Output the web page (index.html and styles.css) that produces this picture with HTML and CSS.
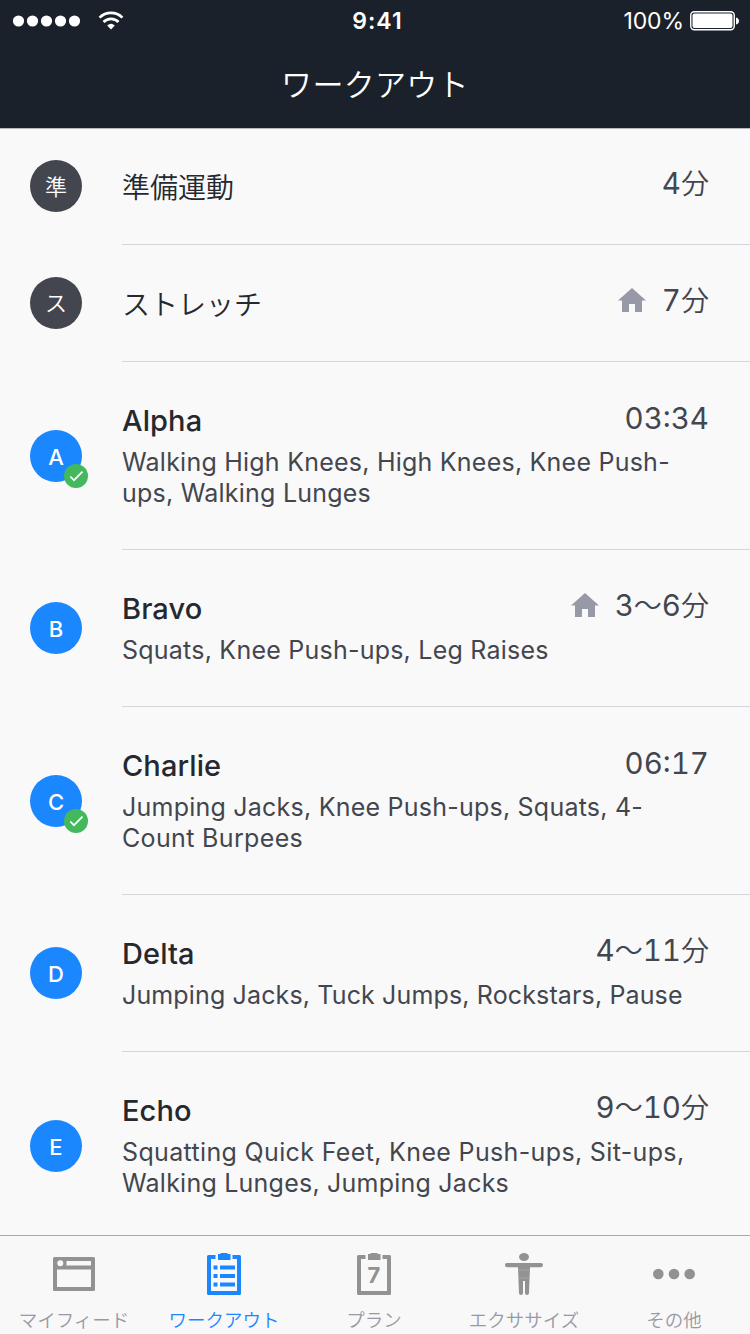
FILE: index.html
```html
<!DOCTYPE html>
<html lang="ja">
<head>
<meta charset="utf-8">
<title>ワークアウト</title>
<link rel="stylesheet" href="styles.css">
</head>
<body>
<div class="screen">
  <header class="header">
    <div class="status">
      <div class="status-left">
        <svg width="68" height="12" viewBox="0 0 68 12" fill="#fff"><circle cx="5.5" cy="6" r="5.6"/><circle cx="19.5" cy="6" r="5.6"/><circle cx="33.5" cy="6" r="5.6"/><circle cx="47.5" cy="6" r="5.6"/><circle cx="61.5" cy="6" r="5.6"/></svg>
        <svg width="26" height="20" viewBox="0 0 26 20" fill="none" stroke="#fff" stroke-width="2.7"><path d="M1.6 6.6A16.2 16.2 0 0 1 24.4 6.6"/><path d="M5.5 11A10.6 10.6 0 0 1 20.5 11"/><path d="M9.2 14.4A5.7 5.7 0 0 1 16.8 14.4L13 18.6Z" fill="#fff" stroke="none"/></svg>
      </div>
      <div class="clock">9:41</div>
      <div class="status-right">
        <span class="percent">100%</span>
        <svg width="50" height="20" viewBox="0 0 50 20"><rect x=".75" y=".75" width="43.5" height="18" rx="3.5" fill="none" stroke="#fff" stroke-width="1.4"/><rect x="2.5" y="2.5" width="40" height="14.5" rx="2" fill="#fff"/><path d="M46 6.5Q49 7.5 49 10T46 13.5Z" fill="#fff"/></svg>
      </div>
    </div>
    <h1 class="title">ワークアウト</h1>
  </header>
  <main class="list">
    <div class="row"><div class="avatar dark">準</div><div class="body"><div class="line"><span class="name jp">準備運動</span><span class="time">4<i>分</i></span></div></div></div>
    <div class="row"><div class="avatar dark kana">ス</div><div class="body"><div class="line"><span class="name jp">ストレッチ</span><svg class="home" width="28" height="24" viewBox="0 0 28 24"><path d="M14 0L28 12.5H24V24H17V16H11V24H4V12.5H0Z" fill="#9899a6"/></svg><span class="time">7<i>分</i></span></div></div></div>
    <div class="row"><div class="avatar">A<svg class="check" width="24" height="24" viewBox="0 0 24 24"><circle cx="12" cy="12" r="12" fill="#44b85c"/><path d="M6.3 12.5L10 16.2L18.5 7.6" fill="none" stroke="#fff" stroke-width="1.7"/></svg></div><div class="body"><div class="line"><span class="name">Alpha</span><span class="time">03:34</span></div><p class="sub">Walking High Knees, High Knees, Knee Push-<br>ups, Walking Lunges</p></div></div>
    <div class="row"><div class="avatar raised">B</div><div class="body"><div class="line"><span class="name">Bravo</span><svg class="home" width="28" height="24" viewBox="0 0 28 24"><path d="M14 0L28 12.5H24V24H17V16H11V24H4V12.5H0Z" fill="#9899a6"/></svg><span class="time">3<i>〜</i>6<i>分</i></span></div><p class="sub">Squats, Knee Push-ups, Leg Raises</p></div></div>
    <div class="row"><div class="avatar">C<svg class="check" width="24" height="24" viewBox="0 0 24 24"><circle cx="12" cy="12" r="12" fill="#44b85c"/><path d="M6.3 12.5L10 16.2L18.5 7.6" fill="none" stroke="#fff" stroke-width="1.7"/></svg></div><div class="body"><div class="line"><span class="name">Charlie</span><span class="time">06:17</span></div><p class="sub">Jumping Jacks, Knee Push-ups, Squats, 4-<br><span class="wide">Count Burpees</span></p></div></div>
    <div class="row"><div class="avatar raised">D</div><div class="body"><div class="line"><span class="name">Delta</span><span class="time">4<i>〜</i>11<i>分</i></span></div><p class="sub tight">Jumping Jacks, Tuck Jumps, Rockstars, Pause</p></div></div>
    <div class="row"><div class="avatar">E</div><div class="body"><div class="line"><span class="name">Echo</span><span class="time">9<i>〜</i>10<i>分</i></span></div><p class="sub"><span class="wide">Squatting Quick Feet, Knee Push-ups, Sit-ups,</span><br>Walking Lunges, Jumping Jacks</p></div></div>
  </main>
  <nav class="tabs">
    <div class="tab"><svg width="44" height="44" viewBox="0 0 44 44"><path fill="#929292" fill-rule="evenodd" d="M2.5 5H41.5Q43 5 43 6.5V37.5Q43 39 41.5 39H2.5Q1 39 1 37.5V6.5Q1 5 2.5 5ZM5 17.5V35H39V17.5ZM14.5 9V13.5H39V9ZM8.3 8.2A3 3 0 1 0 8.3 14.2A3 3 0 1 0 8.3 8.2Z"/></svg><span>マイフィード</span></div>
    <div class="tab active"><svg width="44" height="44" viewBox="0 0 44 44" fill="#1b87ff"><path d="M13.5 3H6.5Q5 3 5 4.5V41.5Q5 43 6.5 43H37.5Q39 43 39 41.5V4.5Q39 3 37.5 3H30.5V7H35V39H9V7H13.5Z"/><path d="M16 2H18L19 1H25L26 2H28.5V8H16Z"/><path d="M11.5 13.5h4v4h-4zM18 13.5h15v4H18zM11.5 22h4v4h-4zM18 22h15v4H18zM11.5 30.5h4v4h-4zM18 30.5h15v4H18z"/></svg><span>ワークアウト</span></div>
    <div class="tab"><svg width="44" height="44" viewBox="0 0 44 44" fill="#929292"><path d="M13.5 3H6.5Q5 3 5 4.5V41.5Q5 43 6.5 43H37.5Q39 43 39 41.5V4.5Q39 3 37.5 3H30.5V7H35V39H9V7H13.5Z"/><path d="M16 2H18L19 1H25L26 2H28.5V8H16Z"/><text class="seven" x="22" y="31.3" text-anchor="middle">7</text></svg><span>プラン</span></div>
    <div class="tab"><svg width="44" height="44" viewBox="0 0 44 44" fill="#929292"><ellipse cx="22" cy="5" rx="5" ry="4"/><path d="M5 11H39Q41 11 41 13T39 15.3H28L27 41Q27 43 25 43T23 41V29H21V41Q21 43 19 43T17 41L16 15.3H5Q3 15.3 3 13T5 11Z"/><path d="M16.5 18h11M17 26h10" stroke="#b5b5b5" stroke-width=".6"/></svg><span>エクササイズ</span></div>
    <div class="tab"><svg width="44" height="44" viewBox="0 0 44 44" fill="#929292"><circle cx="6.3" cy="22" r="5.3"/><circle cx="22" cy="22" r="5.3"/><circle cx="37.7" cy="22" r="5.3"/></svg><span>その他</span></div>
  </nav>
</div>
</body>
</html>
```
FILE: styles.css
```css
* { box-sizing: border-box; margin: 0; padding: 0; }
body { width: 750px; height: 1334px; overflow: hidden; background: #f9f9f9; font-family: Inter, "Noto Sans CJK JP", sans-serif; }
i { font-style: normal; }
svg { display: block; flex: none; }
.screen { width: 750px; height: 1334px; display: flex; flex-direction: column; }
.header { height: 128px; background: #1b212b; color: #fff; flex: none; box-shadow: 0 1px #b9b9bb; }
.status { height: 41px; display: grid; grid-template-columns: 1fr auto 1fr; align-items: center; padding: 0 10px 0 13px; }
.status-left { display: flex; align-items: center; gap: 17px; }
.status-right { display: flex; align-items: center; justify-content: flex-end; gap: 6px; }
.clock { font-size: 23px; font-weight: 600; letter-spacing: 1px; padding: 1px 0 0 2px; }
.percent { font-size: 23px; letter-spacing: -.1px; padding-top: 1px; }
.title { text-align: center; font: 350 31px/84px "Noto Sans CJK JP DemiLight", "Noto Sans CJK JP", sans-serif; letter-spacing: .3px; }
.list { flex: none; height: 1107px; overflow: hidden; }
.row { display: flex; align-items: center; padding-left: 30px; gap: 40px; }
.avatar { width: 52px; height: 52px; border-radius: 50%; background: #1b87ff; color: #fff; flex: none; display: flex; align-items: center; justify-content: center; position: relative; font-size: 22px; font-weight: 500; padding-top: 2px; }
.raised { margin-bottom: 2px; }
.dark { background: #43464e; font-weight: 350; margin-bottom: 2px; padding: 0 0 2px; }
.kana { padding-bottom: 4px; }
.check { position: absolute; left: 34px; top: 34px; }
.body { flex: 1; border-bottom: 1px solid #d5d6d8; padding: 39px 41px 39px 0; }
.line { height: 38px; display: flex; align-items: center; }
.name { margin-right: auto; font-size: 29px; font-weight: 500; color: #25282e; letter-spacing: .1px; }
.jp { font-size: 28px; font-weight: 350; letter-spacing: 0; }
.home { margin: -7px 16px 0 0; }
.time { font-size: 29.5px; color: #43464e; margin-top: -5px; line-height: 38px; font-variant-numeric: tabular-nums; }
.time i { font-size: 28px; font-weight: 350; }
.sub { margin: 8px 0 1px; font-size: 25px; line-height: 31px; letter-spacing: .23px; color: #43464e; white-space: nowrap; }
.tight { letter-spacing: .14px; }
.wide { letter-spacing: .35px; }
.tabs { height: 99px; border-top: 1px solid #a9a9ab; background: #f8f8f8; display: flex; padding: 16px 1px 0 0; margin-left: -1px; }
.tab { width: 150px; flex: none; display: flex; flex-direction: column; align-items: center; color: #9899a6; font: 350 18.5px/26px "Noto Sans CJK JP DemiLight", "Noto Sans CJK JP", sans-serif; gap: 10px; }
.active { color: #1b87ff; }
.seven { font: 700 22px Inter, sans-serif; }
```
